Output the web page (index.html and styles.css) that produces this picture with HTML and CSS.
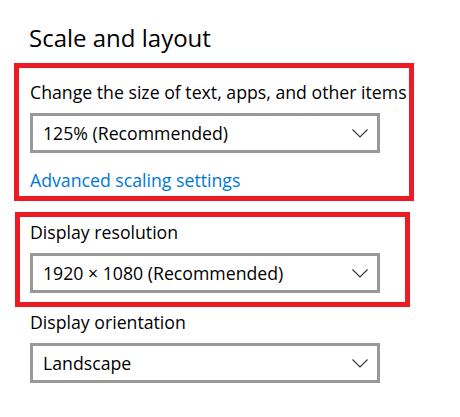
FILE: index.html
```html
<!DOCTYPE html>
<html lang="en">
<head>
    <meta charset="UTF-8">
    <meta name="viewport" content="width=device-width, initial-scale=1.0">
    <title>Scale and layout</title>
    <link rel="stylesheet" href="styles.css">
</head>
<body>
    <h1>Scale and layout</h1>

    <div class="group group-scale">
        <div class="label">Change the size of text, apps, and other items</div>
        <div class="dropdown">
            <span>125% (Recommended)</span>
            <svg class="chevron" width="16" height="9" viewBox="0 0 16 9"><polyline points="0.5,0.5 8,8 15.5,0.5" /></svg>
        </div>
        <a class="link" href="#">Advanced scaling settings</a>
    </div>

    <div class="group group-resolution">
        <div class="label">Display resolution</div>
        <div class="dropdown">
            <span>1920 × 1080 (Recommended)</span>
            <svg class="chevron" width="16" height="9" viewBox="0 0 16 9"><polyline points="0.5,0.5 8,8 15.5,0.5" /></svg>
        </div>
    </div>

    <div class="plain">
        <div class="label">Display orientation</div>
        <div class="dropdown">
            <span>Landscape</span>
            <svg class="chevron" width="16" height="9" viewBox="0 0 16 9"><polyline points="0.5,0.5 8,8 15.5,0.5" /></svg>
        </div>
    </div>
</body>
</html>
```

FILE: styles.css
```css
body {
    font-family: "Open Sans", "Noto Sans", sans-serif;
    color: #000;
    background: #fff;
    margin: 0;
    padding: 22px 0 0 14px;
}
h1 {
    font-size: 24px;
    font-weight: normal;
    line-height: 32px;
    margin: 0 0 9px 15px;
}
.label {
    font-size: 17.7px;
    line-height: 24px;
    white-space: nowrap;
}
.group {
    border: 5px solid #ed1c24;
    box-sizing: border-box;
}
.group-scale {
    width: 400px;
    padding: 12px 0 4px 11px;
}
.group-resolution {
    width: 395px;
    margin: 11px 0 0 1px;
    padding: 3px 0 9px 10px;
}
.plain {
    margin-top: 3px;
    padding-left: 16px;
}
.dropdown {
    width: 350px;
    height: 40px;
    box-sizing: border-box;
    border: 3px solid #999;
    margin-top: 9px;
    padding: 0 9px 0 10px;
    display: flex;
    align-items: center;
    justify-content: space-between;
    font-size: 17.7px;
}
.chevron polyline {
    fill: none;
    stroke: #333;
    stroke-width: 1.1;
}
.link {
    display: block;
    margin-top: 15px;
    font-size: 17.7px;
    line-height: 24px;
    color: #0078d7;
    text-decoration: none;
}
```
